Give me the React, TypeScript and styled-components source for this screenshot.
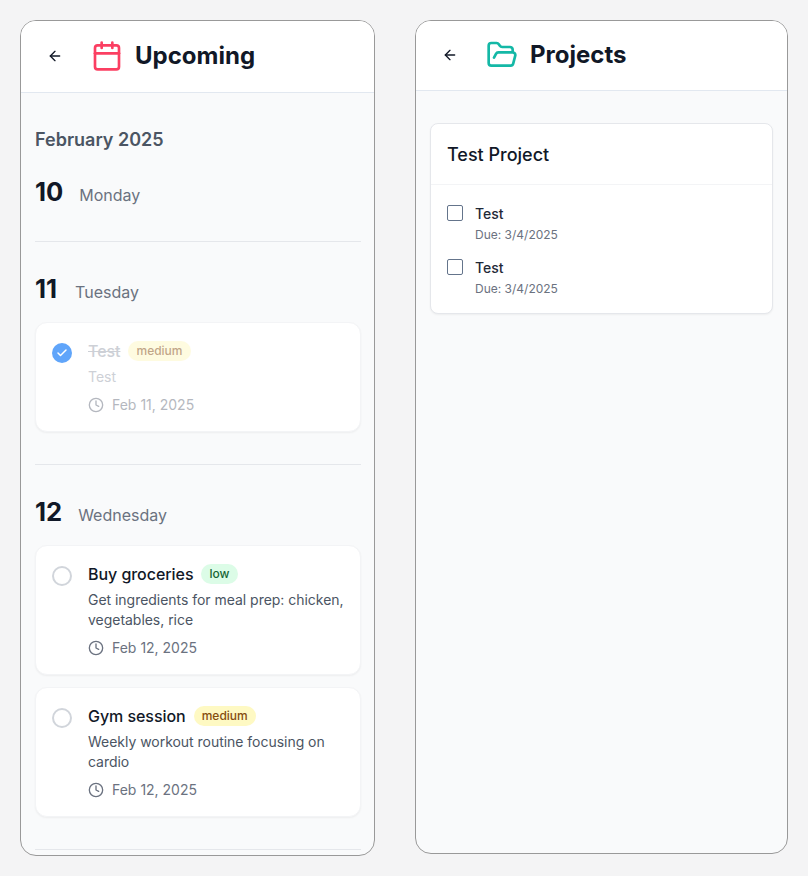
import React from 'react';
import styled, { createGlobalStyle } from 'styled-components';
import { ArrowLeft, Calendar, Check, Clock, FolderOpen } from 'lucide-react';

const GlobalStyle = createGlobalStyle`
  html, body {
    margin: 0;
    padding: 0;
    background: #f4f4f5;
    font-family: Inter, "Liberation Sans", sans-serif;
    color: #111827;
  }
  * { box-sizing: border-box; }
`;

const Page = styled.div`
  width: 808px;
  height: 876px;
  display: flex;
  align-items: flex-start;
  gap: 40px;
  padding: 20px 20px 0;
  overflow: hidden;
`;

const Panel = styled.section<{ $width: number; $height: number }>`
  width: ${(p) => p.$width}px;
  height: ${(p) => p.$height}px;
  flex-shrink: 0;
  display: flex;
  flex-direction: column;
  background: #f9fafb;
  border: 1px solid #999;
  border-radius: 16px;
  overflow: hidden;
`;

const Header = styled.header<{ $height: number }>`
  height: ${(p) => p.$height}px;
  flex-shrink: 0;
  display: flex;
  align-items: center;
  padding: 0 16px 2px;
  background: #fff;
  border-bottom: 1px solid #e2e8f0;
`;

const BackButton = styled.button`
  width: 36px;
  height: 36px;
  display: flex;
  align-items: center;
  justify-content: center;
  margin-right: 18px;
  padding: 0;
  border: none;
  background: none;
  color: #111827;
`;

const Title = styled.h1`
  margin: 0 0 0 12px;
  font-size: 24px;
  line-height: 32px;
  font-weight: 700;
  color: #111827;
`;

const UpcomingBody = styled.div`
  flex: 1;
  padding: 33px 13px 0 14px;
  overflow: hidden;
`;

const Month = styled.h2`
  margin: 0 0 22px;
  font-size: 18px;
  line-height: 28px;
  font-weight: 600;
  color: #4b5563;
`;

const DaySection = styled.div`
  padding-bottom: 32px;
  margin-bottom: 31px;
  border-bottom: 1px solid #e5e7eb;
`;

const DayHead = styled.div<{ $gap: number }>`
  display: flex;
  align-items: baseline;
  gap: ${(p) => p.$gap}px;
  height: 33px;
`;

const DayNumber = styled.span`
  font-size: 25.6px;
  line-height: 32px;
  font-weight: 700;
  color: #111827;
`;

const DayName = styled.span`
  font-size: 16px;
  line-height: 24px;
  color: #6b7280;
`;

const TaskList = styled.div`
  display: flex;
  flex-direction: column;
  gap: 12px;
  margin-top: 16px;
`;

const TaskCard = styled.article`
  display: flex;
  gap: 16px;
  padding: 16px;
  background: #fff;
  border: 1px solid #f3f4f6;
  border-radius: 12px;
  box-shadow: 0 1px 2px rgba(0, 0, 0, 0.05);
`;

const TaskContent = styled.div<{ $done?: boolean }>`
  flex: 1;
  min-width: 0;
  opacity: ${(p) => (p.$done ? 0.5 : 1)};
`;

const RoundCheck = styled.span<{ $done?: boolean }>`
  width: 20px;
  height: 20px;
  margin-top: 4px;
  flex-shrink: 0;
  display: flex;
  align-items: center;
  justify-content: center;
  border-radius: 50%;
  border: ${(p) => (p.$done ? 'none' : '2px solid #d1d5db')};
  background: ${(p) => (p.$done ? '#60a5fa' : 'transparent')};
  color: #fff;
`;

const TaskTitleRow = styled.div`
  display: flex;
  align-items: center;
  gap: 8px;
  height: 24px;
  margin-bottom: 4px;
`;

const TaskTitle = styled.span<{ $done?: boolean }>`
  font-size: 16px;
  line-height: 24px;
  font-weight: 500;
  letter-spacing: -0.05px;
  color: ${(p) => (p.$done ? '#9ca3af' : '#111827')};
  text-decoration: ${(p) => (p.$done ? 'line-through' : 'none')};
`;

const Priority = styled.span<{ $level: 'low' | 'medium' }>`
  height: 20px;
  padding: 0 8px;
  border-radius: 999px;
  font-size: 12px;
  line-height: 20px;
  font-weight: 500;
  background: ${(p) => (p.$level === 'low' ? '#dcfce7' : '#fef9c3')};
  color: ${(p) => (p.$level === 'low' ? '#166534' : '#854d0e')};
`;

const TaskText = styled.p<{ $done?: boolean }>`
  margin: 0;
  font-size: 14px;
  line-height: 20px;
  letter-spacing: -0.03px;
  color: ${(p) => (p.$done ? '#9ca3af' : '#4b5563')};
`;

const TaskDate = styled.div`
  display: flex;
  align-items: center;
  gap: 8px;
  margin-top: 8px;
  font-size: 14px;
  line-height: 20px;
  color: #6b7280;
`;

const ProjectsBody = styled.div`
  flex: 1;
  padding: 32px 14px 0;
`;

const ProjectCard = styled.article`
  background: #fff;
  border: 1px solid #e5e7eb;
  border-radius: 8px;
  box-shadow: 0 1px 2px rgba(0, 0, 0, 0.05);
`;

const ProjectName = styled.h3`
  margin: 0;
  height: 61px;
  padding: 17px 16px 0;
  font-size: 18px;
  line-height: 28px;
  font-weight: 500;
  color: #111827;
  border-bottom: 1px solid #f3f4f6;
`;

const ProjectTasks = styled.div`
  display: flex;
  flex-direction: column;
  gap: 13px;
  padding: 19px 16px 14px;
`;

const ProjectTask = styled.div`
  display: flex;
  gap: 12px;
`;

const SquareCheck = styled.span`
  width: 16px;
  height: 16px;
  margin-top: 1px;
  flex-shrink: 0;
  border: 1px solid #64748b;
  border-radius: 2px;
  background: #fff;
`;

const ProjectTaskName = styled.div`
  font-size: 14px;
  line-height: 20px;
  font-weight: 500;
  color: #1f2937;
`;

const ProjectTaskDue = styled.div`
  margin-top: 1px;
  font-size: 12px;
  line-height: 20px;
  color: #6b7280;
`;

type Task = {
  title: string;
  text: string;
  date: string;
  level: 'low' | 'medium';
  done?: boolean;
};

const days: { num: number; name: string; gap: number; tasks: Task[] }[] = [
  { num: 10, name: 'Monday', gap: 16, tasks: [] },
  {
    num: 11,
    name: 'Tuesday',
    gap: 18,
    tasks: [{ title: 'Test', text: 'Test', date: 'Feb 11, 2025', level: 'medium', done: true }],
  },
  {
    num: 12,
    name: 'Wednesday',
    gap: 16,
    tasks: [
      {
        title: 'Buy groceries',
        text: 'Get ingredients for meal prep: chicken, vegetables, rice',
        date: 'Feb 12, 2025',
        level: 'low',
      },
      {
        title: 'Gym session',
        text: 'Weekly workout routine focusing on cardio',
        date: 'Feb 12, 2025',
        level: 'medium',
      },
    ],
  },
];

export default function App() {
  return (
    <>
      <GlobalStyle />
      <Page>
        <Panel $width={355} $height={836}>
          <Header $height={72}>
            <BackButton>
              <ArrowLeft size={16} />
            </BackButton>
            <Calendar size={32} color="#fb3f62" />
            <Title>Upcoming</Title>
          </Header>
          <UpcomingBody>
            <Month>February 2025</Month>
            {days.map((day) => (
              <DaySection key={day.num}>
                <DayHead $gap={day.gap}>
                  <DayNumber>{day.num}</DayNumber>
                  <DayName>{day.name}</DayName>
                </DayHead>
                {day.tasks.length > 0 && (
                  <TaskList>
                    {day.tasks.map((task) => (
                      <TaskCard key={task.title}>
                        <RoundCheck $done={task.done}>
                          {task.done && <Check size={12} strokeWidth={3} />}
                        </RoundCheck>
                        <TaskContent $done={task.done}>
                          <TaskTitleRow>
                            <TaskTitle $done={task.done}>{task.title}</TaskTitle>
                            <Priority $level={task.level}>{task.level}</Priority>
                          </TaskTitleRow>
                          <TaskText $done={task.done}>{task.text}</TaskText>
                          <TaskDate>
                            <Clock size={16} />
                            {task.date}
                          </TaskDate>
                        </TaskContent>
                      </TaskCard>
                    ))}
                  </TaskList>
                )}
              </DaySection>
            ))}
          </UpcomingBody>
        </Panel>
        <Panel $width={373} $height={834}>
          <Header $height={70}>
            <BackButton>
              <ArrowLeft size={16} />
            </BackButton>
            <FolderOpen size={32} color="#14b8a6" />
            <Title>Projects</Title>
          </Header>
          <ProjectsBody>
            <ProjectCard>
              <ProjectName>Test Project</ProjectName>
              <ProjectTasks>
                {[0, 1].map((i) => (
                  <ProjectTask key={i}>
                    <SquareCheck />
                    <div>
                      <ProjectTaskName>Test</ProjectTaskName>
                      <ProjectTaskDue>Due: 3/4/2025</ProjectTaskDue>
                    </div>
                  </ProjectTask>
                ))}
              </ProjectTasks>
            </ProjectCard>
          </ProjectsBody>
        </Panel>
      </Page>
    </>
  );
}
